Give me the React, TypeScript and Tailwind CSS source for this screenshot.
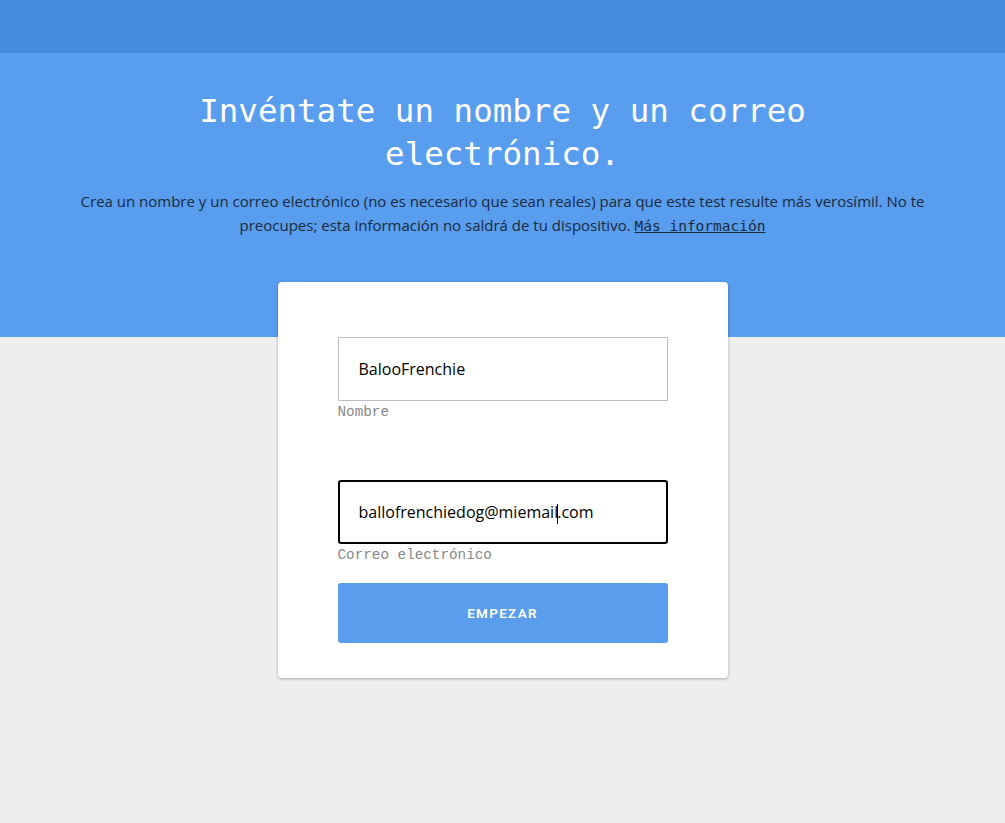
import React from "react";

const mono = "font-['DejaVu_Sans_Mono','Liberation_Mono',monospace]";

function Field({
  value,
  label,
  focused,
  caretAt,
}: {
  value: string;
  label: string;
  focused?: boolean;
  caretAt?: number;
}) {
  const before = caretAt !== undefined ? value.slice(0, caretAt) : value;
  const after = caretAt !== undefined ? value.slice(caretAt) : "";
  return (
    <div className="flex flex-col">
      <div
        className={
          focused
            ? "h-[64px] flex items-center px-[19px] border-2 border-black rounded-[3px] bg-white"
            : "h-[64px] flex items-center px-[20px] border border-[#bdbdbd] bg-white"
        }
      >
        <span className="text-[16px] text-black font-['Open_Sans',sans-serif]">
          {before}
          {caretAt !== undefined && (
            <span className="inline-block w-px h-[20px] bg-black align-middle -mx-px" />
          )}
          {after}
        </span>
      </div>
      <span
        className={`font-['Liberation_Mono',monospace] text-[14.3px] text-[#888] mt-[1px] leading-[20px]`}
      >
        {label}
      </span>
    </div>
  );
}

export default function App() {
  return (
    <div className="min-h-[823px] bg-[#eeeeee] font-['Open_Sans',sans-serif]">
      <div className="h-[53px] bg-[#448bdb]" />
      <div className="h-[284px] bg-[#589dee] pt-[37px] flex flex-col items-center">
        <h1
          className={`${mono} text-white text-[32.5px] leading-[43px] text-center max-w-[640px]`}
        >
          Invéntate un nombre y un correo electrónico.
        </h1>
        <p className="mt-[13px] text-[15px] leading-[24px] text-[#1b2a3b] text-center max-w-[870px]">
          Crea un nombre y un correo electrónico (no es necesario que sean reales) para que este
          test resulte más verosímil. No te preocupes; esta información no saldrá de tu
          dispositivo.{" "}
          <a className={`${mono} text-[14.5px] underline`}>Más información</a>
        </p>
      </div>
      <div className="flex justify-center -mt-[55px]">
        <div className="w-[450px] bg-white rounded-[4px] shadow-[0_1px_3px_rgba(0,0,0,0.3)] pt-[55px] pb-[35px] px-[60px] flex flex-col">
          <Field value="BalooFrenchie" label="Nombre" />
          <div className="h-[58px]" />
          <Field
            value="ballofrenchiedog@miemail.com"
            label="Correo electrónico"
            focused
            caretAt={24}
          />
          <button className="mt-[18px] h-[60px] bg-[#5a9dec] rounded-[3px] text-white text-[13.5px] font-semibold tracking-[1.3px] font-['Roboto',sans-serif]">
            EMPEZAR
          </button>
        </div>
      </div>
    </div>
  );
}
